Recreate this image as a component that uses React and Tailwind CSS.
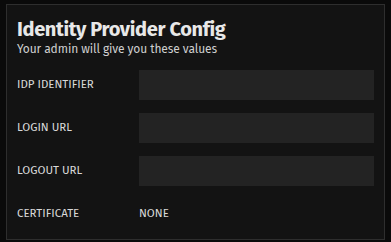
const fields = [
  { label: "IDP IDENTIFIER" },
  { label: "LOGIN URL" },
  { label: "LOGOUT URL" },
]

export default function App() {
  return (
    <div
      className="w-[391px] h-[242px] bg-[#0a0a0a] pl-[6px] pr-[6px] pt-[4px] pb-[2px]"
      style={{ fontFamily: '"Fira Sans", "Open Sans", "Noto Sans", sans-serif' }}
    >
      <div className="h-[236px] border border-[#2e2e2e] bg-[#131313] pl-[10px] pr-[10px] pt-[12px]">
        <h1 className="text-[20px] leading-[24px] font-bold text-[#e8e8e8] tracking-[-0.35px]">
          Identity Provider Config
        </h1>
        <p className="text-[12px] leading-[16px] text-[#cfcfcf] tracking-[-0.1px]">
          Your admin will give you these values
        </p>
        <div className="mt-[13px] flex flex-col gap-[13px]">
          {fields.map((f) => (
            <div key={f.label} className="flex items-center">
              <span className="w-[122px] text-[11.5px] text-[#d8d8d8] uppercase">{f.label}</span>
              <div className="h-[30px] w-[235px] bg-[#232323]" />
            </div>
          ))}
          <div className="flex items-center h-[30px]">
            <span className="w-[122px] text-[11.5px] text-[#d8d8d8]">CERTIFICATE</span>
            <span className="text-[11.5px] text-[#d8d8d8]">NONE</span>
          </div>
        </div>
      </div>
    </div>
  )
}
